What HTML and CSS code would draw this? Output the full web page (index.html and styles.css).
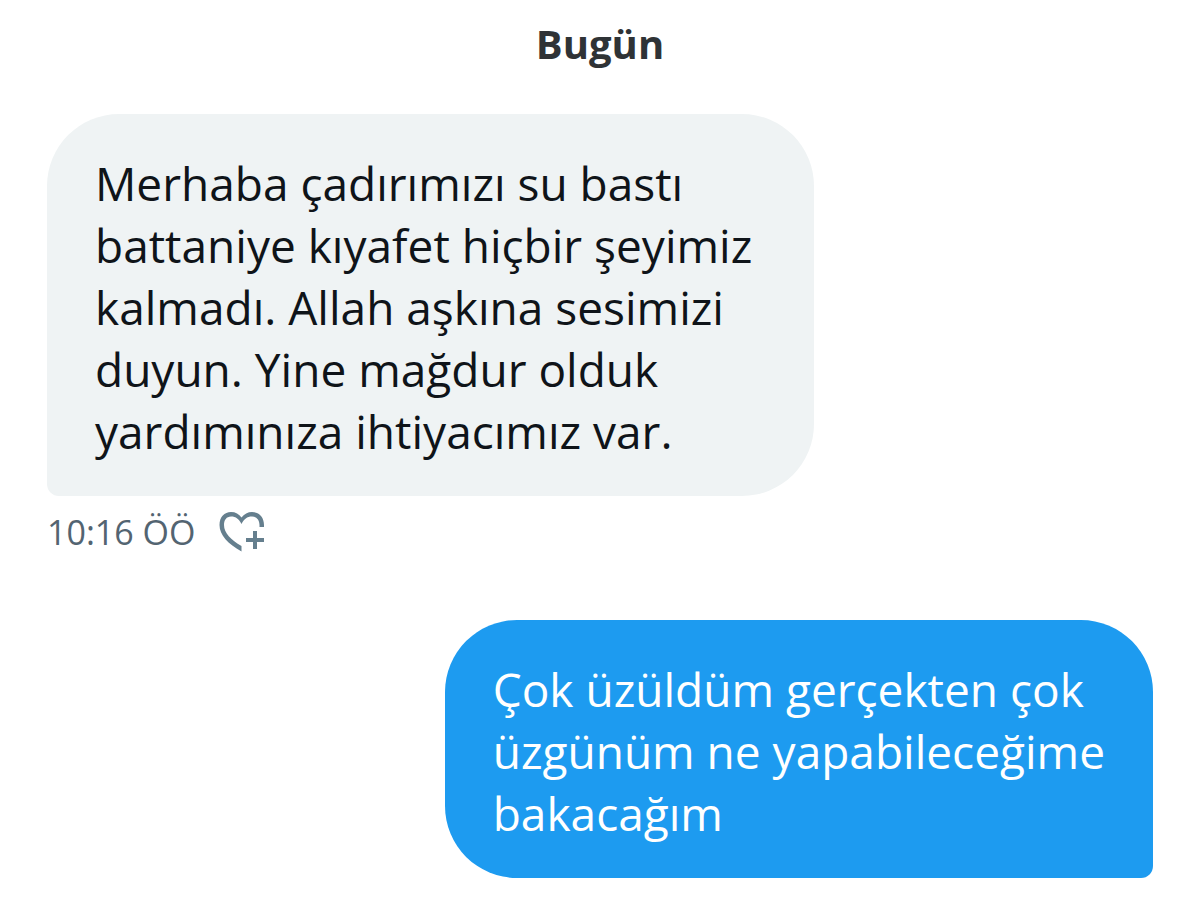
FILE: index.html
```
<!DOCTYPE html>
<html lang="tr">
<head>
    <meta charset="utf-8">
    <title>Mesajlar</title>
    <link rel="stylesheet" href="styles.css">
</head>
<body>
<main class="chat">
    <h1 class="day">Bugün</h1>
    <div class="message received">
        <p class="bubble">Merhaba çadırımızı su bastı<br>battaniye kıyafet hiçbir şeyimiz<br>kalmadı. Allah aşkına sesimizi<br>duyun. Yine mağdur olduk<br>yardımınıza ihtiyacımız var.</p>
        <div class="meta">
            <time datetime="10:16">10:16 ÖÖ</time>
            <button class="react" type="button" aria-label="Tepki ekle">
                <svg viewBox="0 0 46 40" width="46" height="40" fill="#657f8e">
                    <path d="M45 15H40.5V13C40.5 8 37.5 4.500 33 4.500C28 4.500 25 7 22.500 12C20 7 17 4.500 12 4.500C7.500 4.500 5 8 5 13C5 21 12 28 22.500 34V39.500C9 32 .5 23 .5 13C.5 5 5.500 0 12 0C16.500 0 20 2 22.500 5.500C25 2 29 0 33 0C40 0 45 5 45 13Z"/>
                    <path d="M34 19H38V26H45V30H38V37H34V30H27V26H34Z"/>
                </svg>
            </button>
        </div>
    </div>
    <div class="message sent">
        <p class="bubble">Çok üzüldüm gerçekten çok<br>üzgünüm ne yapabileceğime<br>bakacağım</p>
    </div>
</main>
</body>
</html>
```

FILE: styles.css
```
body{
    margin: 0;
    background: #fff;
    color: #0f1419;
    font-family: "Open Sans", "Noto Sans", sans-serif;
}
.chat{
    display: flex;
    flex-direction: column;
    padding: 19px 47px 24px;
}
.day{
    margin: 0 0 45px;
    font-size: 40px;
    line-height: 50px;
    font-weight: 700;
    text-align: center;
    color: #2f3336;
}
.message{
    display: flex;
    flex-direction: column;
    align-items: flex-start;
}
.bubble{
    margin: 0;
    padding: 38px 48px 34px;
    font-size: 46px;
    line-height: 62px;
}
.received .bubble{
    padding-right: 62px;
    background: #eff3f4;
    border-radius: 72px 72px 72px 12px;
}
.sent{
    margin-top: 64px;
    align-items: flex-end;
}
.sent .bubble{
    background: #1d9bf0;
    color: #fff;
    border-radius: 72px 72px 12px 72px;
}
.meta{
    display: flex;
    align-items: center;
    gap: 24px;
    margin-top: 12px;
    font-size: 34px;
    line-height: 48px;
    color: #536471;
}
.react{
    display: flex;
    padding: 0;
    border: 0;
    background: none;
    cursor: pointer;
}
```
